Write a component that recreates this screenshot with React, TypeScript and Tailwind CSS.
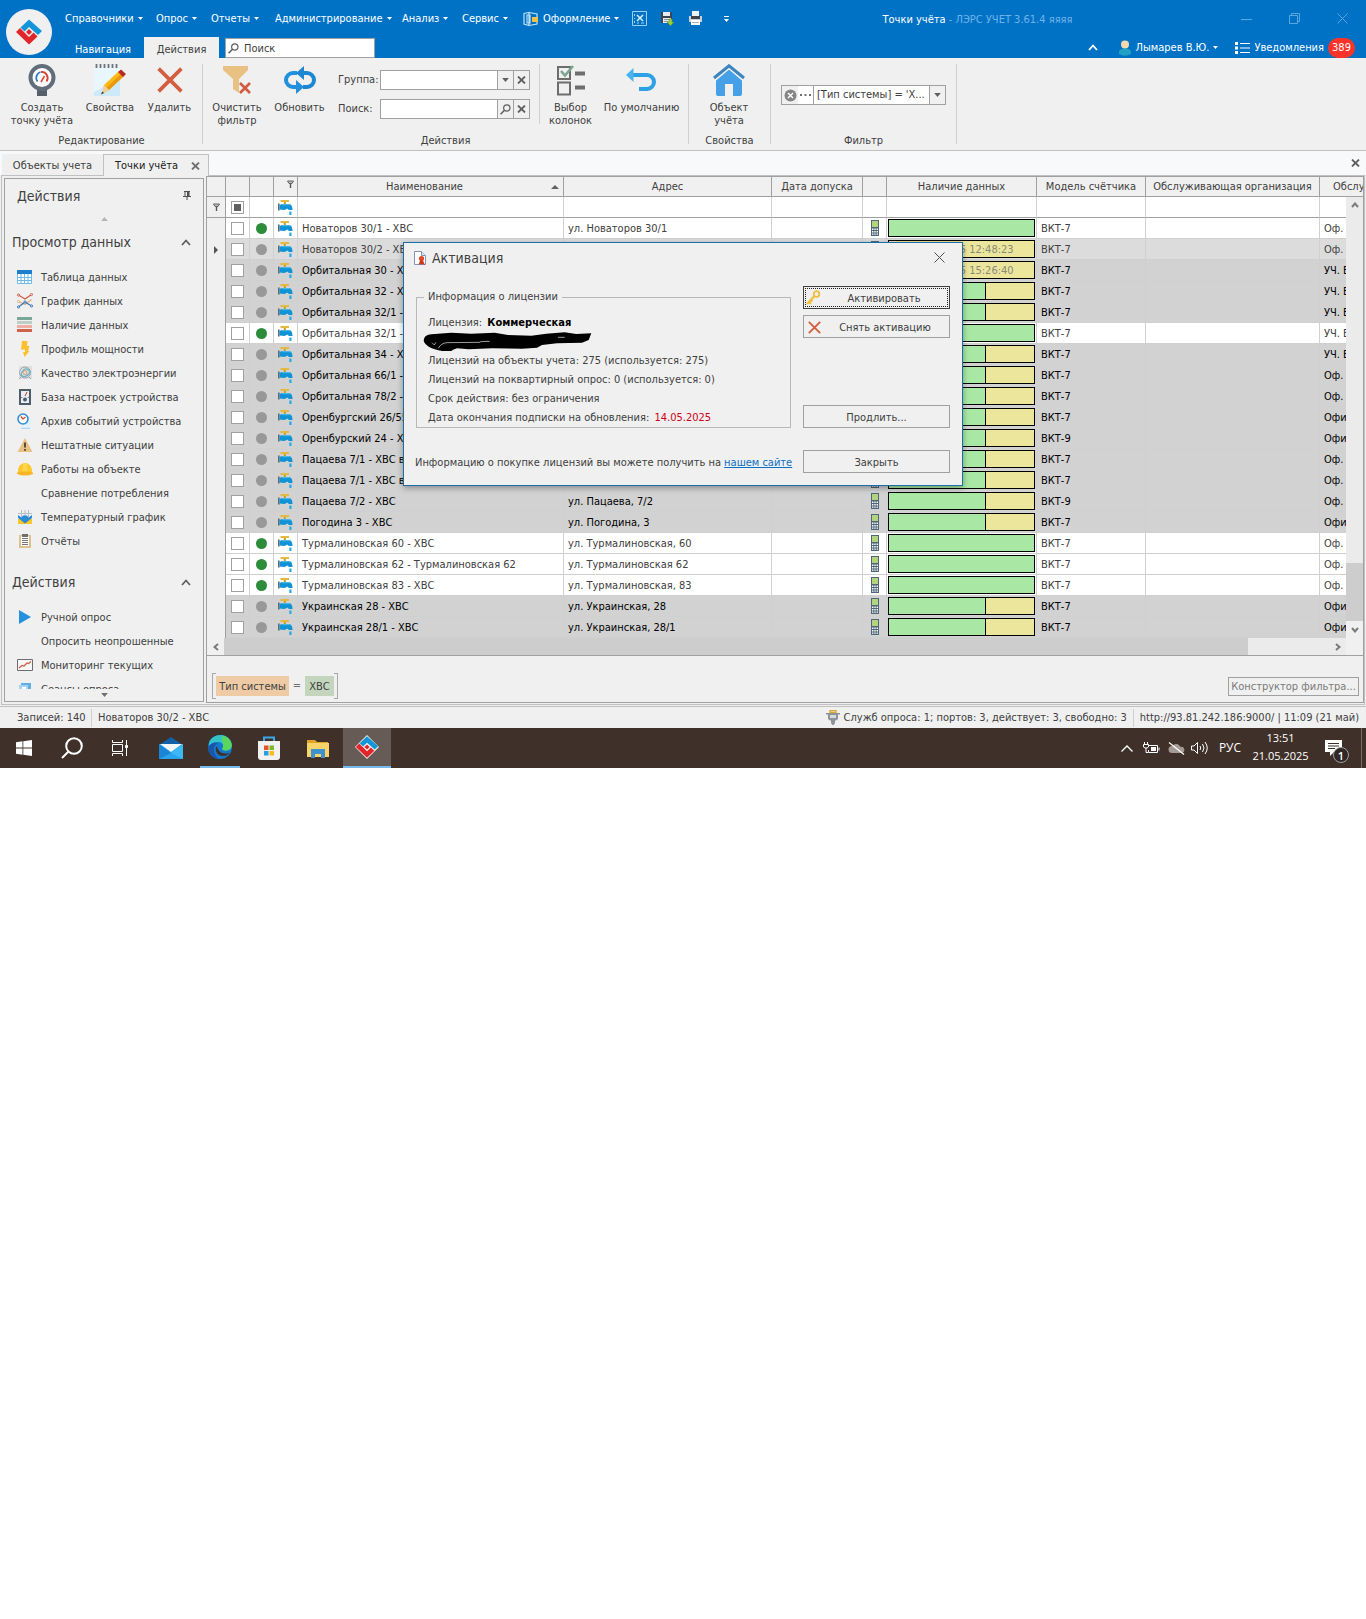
import React from 'react'
import clsx from 'clsx'

type IconProps = { className?: string }

type PointRow = {
  name: string
  address: string
  model: string
  service: string
  state: 'ok' | 'off' | 'current'
  data: 'full' | 'part' | string
}

const MENU = [
  { title: 'Справочники', width: 'w-[91px]' },
  { title: 'Опрос', width: 'w-[55px]' },
  { title: 'Отчеты', width: 'w-[64px]' },
  { title: 'Администрирование', width: 'w-[127px]' },
  { title: 'Анализ', width: 'w-[60px]' },
  { title: 'Сервис', width: 'w-[61px]' },
]

const ROWS: PointRow[] = [
  { name: 'Новаторов 30/1 - ХВС', address: 'ул. Новаторов 30/1', model: 'ВКТ-7', service: 'Оф.', state: 'ok', data: 'full' },
  { name: 'Новаторов 30/2 - ХВС', address: 'ул. Новаторов 30/2', model: 'ВКТ-7', service: 'Оф.', state: 'current', data: '14.05.2025 12:48:23' },
  { name: 'Орбитальная 30 - ХВС', address: 'ул. Орбитальная, 30', model: 'ВКТ-7', service: 'УЧ. Е', state: 'off', data: '14.05.2025 15:26:40' },
  { name: 'Орбитальная 32 - ХВС', address: 'ул. Орбитальная, 32', model: 'ВКТ-7', service: 'УЧ. Е', state: 'off', data: 'part' },
  { name: 'Орбитальная 32/1 - ХВС', address: 'ул. Орбитальная, 32/1', model: 'ВКТ-7', service: 'УЧ. Е', state: 'off', data: 'part' },
  { name: 'Орбитальная 32/1 - ХВС', address: 'ул. Орбитальная, 32/1', model: 'ВКТ-7', service: 'УЧ. Е', state: 'ok', data: 'full' },
  { name: 'Орбитальная 34 - ХВС', address: 'ул. Орбитальная, 34', model: 'ВКТ-7', service: 'УЧ. Е', state: 'off', data: 'part' },
  { name: 'Орбитальная 66/1 - ХВС', address: 'ул. Орбитальная, 66/1', model: 'ВКТ-7', service: 'Оф.', state: 'off', data: 'part' },
  { name: 'Орбитальная 78/2 - ХВС', address: 'ул. Орбитальная, 78/2', model: 'ВКТ-7', service: 'Оф.', state: 'off', data: 'part' },
  { name: 'Оренбургский 26/55 - ХВС', address: 'пр. Оренбургский, 26/55', model: 'ВКТ-7', service: 'Офис', state: 'off', data: 'part' },
  { name: 'Оренбурский 24 - ХВС', address: 'пр. Оренбургский, 24', model: 'ВКТ-9', service: 'Офис', state: 'off', data: 'part' },
  { name: 'Пацаева 7/1 - ХВС ввод 1', address: 'ул. Пацаева, 7/1', model: 'ВКТ-7', service: 'Оф.', state: 'off', data: 'part' },
  { name: 'Пацаева 7/1 - ХВС ввод 2', address: 'ул. Пацаева, 7/1', model: 'ВКТ-7', service: 'Оф.', state: 'off', data: 'part' },
  { name: 'Пацаева 7/2 - ХВС', address: 'ул. Пацаева, 7/2', model: 'ВКТ-9', service: 'Оф.', state: 'off', data: 'part' },
  { name: 'Погодина 3 - ХВС', address: 'ул. Погодина, 3', model: 'ВКТ-7', service: 'Офис', state: 'off', data: 'part' },
  { name: 'Турмалиновская 60 - ХВС', address: 'ул. Турмалиновская, 60', model: 'ВКТ-7', service: 'Оф.', state: 'ok', data: 'full' },
  { name: 'Турмалиновская 62 - Турмалиновская 62', address: 'ул. Турмалиновская 62', model: 'ВКТ-7', service: 'Оф.', state: 'ok', data: 'full' },
  { name: 'Турмалиновская 83 - ХВС', address: 'ул. Турмалиновская, 83', model: 'ВКТ-7', service: 'Оф.', state: 'ok', data: 'full' },
  { name: 'Украинская 28 - ХВС', address: 'ул. Украинская, 28', model: 'ВКТ-7', service: 'Офис', state: 'off', data: 'part' },
  { name: 'Украинская 28/1 - ХВС', address: 'ул. Украинская, 28/1', model: 'ВКТ-7', service: 'Офис', state: 'off', data: 'part' },
]

const ROW_STYLE = {
  ok: 'bg-white text-[#404040]',
  off: 'bg-[#d2d2d2] text-black',
  current: 'bg-[#dcdcdc] text-[#404040]',
} as const

const CELL = 'h-[21px] border-r border-b border-[#d0d0d0] px-1 pt-px whitespace-nowrap overflow-hidden'
const ICON_CELL = 'h-[21px] border-r border-b border-[#d0d0d0]'
const FILTER_CELL = 'h-[21px] border-r border-b border-[#d0d0d0] border-b-[#a0a0a0]'
const HEAD = 'h-5 border-r border-b border-[#a0a0a0] bg-[#f0f0f0] font-normal whitespace-nowrap overflow-hidden'
const EDIT_BUTTON = 'flex w-4 shrink-0 items-center justify-center border-l border-[#a0a0a0] bg-[#f0f0f0] text-[#606060]'

/* ---------- icons ---------- */

const CaretDown: React.FC<IconProps> = ({ className }) => (
  <svg width="5" height="3" viewBox="0 0 5 3" className={clsx('shrink-0', className)}>
    <path d="M0 0h5L2.500 3z" fill="currentColor" />
  </svg>
)

const Chevron: React.FC<IconProps> = ({ className }) => (
  <svg width="10" height="7" viewBox="0 0 10 7" className={clsx('shrink-0', className)}>
    <path d="M1 6l4-4.500L9 6" fill="none" stroke="currentColor" strokeWidth="1.800" />
  </svg>
)

const ScrollArrow: React.FC<IconProps> = ({ className }) => (
  <svg width="8" height="6" viewBox="0 0 8 6" className={clsx('shrink-0', className)}>
    <path d="M1 5l3-3.500L7 5" fill="none" stroke="#7a7a7a" strokeWidth="2" />
  </svg>
)

const Cross: React.FC<IconProps> = ({ className }) => (
  <svg width="9" height="8" viewBox="0 0 9 8" className={clsx('shrink-0', className)}>
    <path d="M1 .5l7 7M8 .5l-7 7" stroke="currentColor" strokeWidth="1.800" />
  </svg>
)

const RedCross: React.FC<{ size: number }> = ({ size }) => (
  <svg width={size} height={size} viewBox="0 0 24 24" className="shrink-0">
    <path d="M1.500 1.500L22.500 22.500M22.500 1.500L1.500 22.500" stroke="#d45d3f" strokeWidth="3.400" />
  </svg>
)

const Magnifier: React.FC<IconProps> = ({ className }) => (
  <svg width="11" height="11" viewBox="0 0 11 11" className={clsx('shrink-0', className)}>
    <circle cx="6.800" cy="4" r="3.200" fill="none" stroke="#606060" strokeWidth="1.200" />
    <path d="M4.500 6.300L.6 10.200" stroke="#606060" strokeWidth="1.600" />
  </svg>
)

const LersMark: React.FC<{ size: number; framed?: boolean }> = ({ size, framed }) => (
  <svg width={size} height={size} viewBox="0 0 28 28">
    {framed && <path d="M14 0l14 14-14 14L0 14z" fill="#f2f2f2" />}
    <path d="M14 1.500L27 13l-4 4-9-8-4.500 4.500L5.500 9.500z" fill="#1296d8" />
    <path d="M1 14l4-4 4.500 4.500L14 19l4.500-4.500 4 4L14 26.500z" fill="#e2252b" />
    <path d="M14 11l3 3-3 3-3-3z" fill="#e2252b" />
  </svg>
)

const MeterIcon = () => (
  <svg width="28" height="32" viewBox="0 0 28 32">
    <path d="M9 24h10v8H9z" fill="#56606b" />
    <circle cx="14" cy="13.500" r="11.500" fill="#fff" stroke="#616d79" strokeWidth="4" />
    <path d="M9.500 17.500a6 6 0 0 1 3-9.500" fill="none" stroke="#2878c8" strokeWidth="1.800" />
    <path d="M13 8a6 6 0 0 1 5.500 9.500" fill="none" stroke="#d9432f" strokeWidth="1.800" />
    <path d="M13 18l3.500-6" stroke="#d9432f" strokeWidth="1.500" />
  </svg>
)

const NotepadIcon = () => (
  <svg width="32" height="32" viewBox="0 0 32 32">
    <path d="M0 4h26v28H0z" fill="#cdeafb" />
    <path d="M0 4h26v10L0 28z" fill="#e8f6fe" />
    <path d="M2.500 0v4M6.500 0v4M10.500 0v4M14.500 0v4M18.500 0v4M22.500 0v4" stroke="#6b7480" strokeWidth="1.800" />
    <path d="M10 21L25 7l5 5-15 14-7 4z" fill="#fdb913" />
    <path d="M12.500 23.500L27.500 9.500l2.500 2.500-15 14z" fill="#e89a0c" />
    <path d="M24 8l3-2.500 5 4.500-3 3z" fill="#b62a25" />
    <path d="M10 21l5 5-7.500 4z" fill="#f0cda0" />
    <path d="M8.300 27.500L10 29l-3 1.500z" fill="#333" />
  </svg>
)

const FunnelIcon = () => (
  <svg width="30" height="30" viewBox="0 0 30 30">
    <path d="M1 1h25v4l-9 9v14l-6-4V14L1 5z" fill="#e8c183" />
    <path d="M18 18l10 10M28 18L18 28" stroke="#d15b40" strokeWidth="2.600" />
  </svg>
)

const RefreshIcon = () => (
  <svg width="32" height="28" viewBox="0 0 32 28">
    <path d="M13 21H9A6.500 6.500 0 0 1 9 7h4" fill="none" stroke="#2390dc" strokeWidth="4" />
    <path d="M19 7h4a6.500 6.500 0 0 1 0 14h-4" fill="none" stroke="#1f86d2" strokeWidth="4" />
    <path d="M20 0v14l-8-7z" fill="#1f86d2" />
    <path d="M12 14v14l8-7z" fill="#2390dc" />
  </svg>
)

const ColumnsIcon = () => (
  <svg width="28" height="32" viewBox="0 0 28 32">
    <path d="M1 3h12v12H1zM1 18.500h12v12H1z" fill="none" stroke="#6d6d6d" strokeWidth="2" />
    <path d="M18 9.500h10M18 23.500h10" stroke="#6d6d6d" strokeWidth="4" />
    <path d="M4 7l4 4.500L16 2" fill="none" stroke="#7aa694" strokeWidth="2.600" />
  </svg>
)

const UndoIcon = () => (
  <svg width="32" height="24" viewBox="0 0 32 24">
    <path d="M6 7h15a6.500 6.500 0 0 1 0 14h-8" fill="none" stroke="#2ea1e6" strokeWidth="4" />
    <path d="M7.500 0v14L0 7z" fill="#48b3ee" />
  </svg>
)

const HouseIcon = () => (
  <svg width="32" height="32" viewBox="0 0 32 32">
    <path d="M3 16L16 4l13 12v14a2 2 0 0 1-2 2h-7V20h-8v12H5a2 2 0 0 1-2-2z" fill="#45a0e8" />
    <path d="M0 16.500L16 3l16 13.500" fill="none" stroke="#f0f0f0" strokeWidth="4" />
    <path d="M1 14L16 1.800 31 14" fill="none" stroke="#3d83bd" strokeWidth="3" />
  </svg>
)

const TapIcon = () => (
  <svg width="15" height="15" viewBox="0 0 15 15" className="mx-auto block">
    <path d="M2.500 0h8.500v2H2.500z" fill="#e3b93e" />
    <path d="M5.800 2h2v2.500h-2z" fill="#c79a22" />
    <path d="M0 3.500h1.600v7H0z" fill="#5c6b78" />
    <path d="M1.600 5L4 4h6c3.200 0 4.500 2 4.500 6h-4c0-1-.5-1.500-1.500-1.300L6.500 10 1.600 9.500z" fill="#0d93d6" />
    <path d="M4 4h6c1.400 0 2.400.4 3.200 1.300H4z" fill="#45b6ea" />
    <path d="M11.300 11.500h2.200V15h-2.200z" fill="#27a9e6" />
  </svg>
)

const DeviceIcon = () => (
  <svg width="8" height="16" viewBox="0 0 8 16" className="mx-auto block">
    <path d="M0 0h8v16H0z" fill="#50677a" />
    <path d="M1 1h6v6H1z" fill="#b3d37c" />
    <path d="M1 8.500h1.400v1.400H1zM3.300 8.500h1.400v1.400H3.300zM5.600 8.500H7v1.400H5.600zM1 11h1.400v1.400H1zM3.300 11h1.400v1.400H3.300zM5.600 11H7v1.400H5.600zM1 13.400h1.400v1.400H1zM3.300 13.400h1.400v1.400H3.300zM5.600 13.400H7v1.400H5.600z" fill="#fff" />
  </svg>
)

const FilterPin: React.FC<IconProps> = ({ className }) => (
  <svg width="7" height="8" viewBox="0 0 7 8" className={className}>
    <path d="M.5 1h6L5 3.500H2z" fill="#bbb" stroke="#666" />
    <path d="M3.500 3.500V8" stroke="#555" strokeWidth="1.400" />
  </svg>
)

const SideTable = () => (
  <svg width="16" height="14" viewBox="0 0 16 14">
    <path d="M.5.500h14v13H.5z" fill="#fff" stroke="#6fb9ea" />
    <path d="M0 0h15v4H0z" fill="#1b7fd0" />
    <path d="M0 7.500h15M0 10.500h15M4 4v10M7.500 4v10M11 4v10" stroke="#6fb9ea" />
  </svg>
)

const SideChart = () => (
  <svg width="16" height="16" viewBox="0 0 16 16" fill="none">
    <path d="M1.500 2L8 6l6.500-4.500" stroke="#d35d45" strokeWidth="1.300" />
    <path d="M1.500 8.500L8 11.500l6.500-5" stroke="#dfb27a" strokeWidth="1.300" />
    <path d="M1.500 14L8 9l6.500 4" stroke="#3c78b4" strokeWidth="1.300" />
    <g fill="#f0f0f0">
      <circle cx="1.500" cy="2" r="1.100" stroke="#d35d45" />
      <circle cx="14.500" cy="1.500" r="1.100" stroke="#d35d45" />
      <circle cx="1.500" cy="8.500" r="1.100" stroke="#dfb27a" />
      <circle cx="1.500" cy="14" r="1.100" stroke="#3c78b4" />
      <circle cx="8" cy="9" r="1.100" stroke="#3c78b4" />
      <circle cx="14.500" cy="13" r="1.100" stroke="#3c78b4" />
    </g>
  </svg>
)

const SideBars = () => (
  <svg width="16" height="16" viewBox="0 0 16 16">
    <path d="M0 0h15v3H0z" fill="#79a898" />
    <path d="M0 4h15v3H0z" fill="#bccfc6" />
    <path d="M0 8h15v3H0z" fill="#eeaea5" />
    <path d="M0 12h15v3H0z" fill="#cf6248" />
  </svg>
)

const SideBolt = () => (
  <svg width="16" height="16" viewBox="0 0 16 16">
    <path d="M5 0h5.500L10 5h2.500L11 10h1.500L7.500 16 6 11h2V8.500H4z" fill="#fcc02e" />
  </svg>
)

const SideQuality = () => (
  <svg width="16" height="16" viewBox="0 0 16 16" fill="none">
    <path d="M2 1h13v13H2z" fill="#dfdfdd" />
    <circle cx="8" cy="7.500" r="5.500" stroke="#9aa6ad" />
    <path d="M4 9c3-7 7-6 9-2-2 5-8 6-9 2z" stroke="#6bb3c8" strokeWidth="1.200" />
    <circle cx="8" cy="7.500" r="2" stroke="#caa27c" />
    <path d="M4 12l-2 2M12 12l2 2" stroke="#9aa6ad" />
  </svg>
)

const SideDevice = () => (
  <svg width="16" height="16" viewBox="0 0 16 16">
    <path d="M2 0h12v16H2z" fill="#4e5d6c" />
    <path d="M4 2h8v6l-2 1h2v5H4V9h2L4 8z" fill="#e9eef2" />
    <path d="M8 7l2-4" stroke="#c0392b" />
    <circle cx="8" cy="10.500" r="2" fill="#4e5d6c" />
  </svg>
)

const SideArchive = () => (
  <svg width="16" height="16" viewBox="0 0 16 16" fill="none">
    <path d="M9 4h5v12H5z" fill="#e2f1fb" />
    <circle cx="6" cy="6" r="5" fill="#fff" stroke="#2f8fd6" strokeWidth="1.600" />
    <path d="M3.800 3.500L6 6l2.500-2" stroke="#d9432f" strokeWidth="1.200" />
    <path d="M4 15.300h9" stroke="#9fd2f4" />
  </svg>
)

const SideWarning = () => (
  <svg width="16" height="14" viewBox="0 0 16 14">
    <path d="M8 0l7.500 14H.5z" fill="#e8c285" />
    <path d="M8 4.500v5M8 11v1.700" stroke="#4d4032" strokeWidth="1.800" />
  </svg>
)

const SideHelmet = () => (
  <svg width="16" height="14" viewBox="0 0 16 14">
    <path d="M1 11V9a7 8 0 0 1 14 0v2z" fill="#fdc62d" />
    <path d="M6 1.500h4l.5 8h-5z" fill="#fdd74a" />
    <path d="M0 10.500q8-2 16 0V12q-8 3-16 0z" fill="#f7b424" />
  </svg>
)

const SideTemp = () => (
  <svg width="16" height="16" viewBox="0 0 16 16">
    <path d="M1 2h14v6H1z" fill="#eef1f3" />
    <path d="M4.500 1v7M8 1v7M11.500 1v7M1 4.500h14" stroke="#b7bec4" />
    <path d="M1 10h14v5H1z" fill="#fdc62d" />
    <path d="M1 6l3.500 2.500L6 6.500h4l1.500 2L15 6v3l-7 5.500L1 9z" fill="#2b8bd4" />
  </svg>
)

const SideReport = () => (
  <svg width="16" height="16" viewBox="0 0 16 16">
    <path d="M2 2h12v13H2z" fill="#dfc08f" />
    <path d="M4 3h8v10H4z" fill="#fafafa" />
    <path d="M5 5.500h6M5 7.500h6M5 9.500h6M5 11.500h6" stroke="#777" />
    <path d="M5 1h6v3H5z" fill="#6f6f6f" />
  </svg>
)

const SidePlay = () => (
  <svg width="16" height="14" viewBox="0 0 16 14">
    <path d="M2 0l12 7-12 7z" fill="#2490de" />
  </svg>
)

const SideMonitor = () => (
  <svg width="16" height="12" viewBox="0 0 16 12" fill="none">
    <path d="M.5.500h15v11H.5z" fill="#f7f7f7" stroke="#6d6d6d" />
    <path d="M2 9l3-2.500 2 .5 3-3 1.500.5L14 2.500" stroke="#d5593f" strokeWidth="1.200" />
  </svg>
)

const SideSession = () => (
  <svg width="16" height="16" viewBox="0 0 16 16">
    <path d="M4 2h10v10H4z" fill="#64aede" />
    <path d="M2 4h9v9H2z" fill="#a8d3ee" />
    <path d="M5 6h4v2H5z" fill="#fff" />
  </svg>
)

/* ---------- title bar and ribbon ---------- */

const TitleBar = () => (
  <header className="flex h-[58px] bg-[#0072c6] pl-[6px] text-white">
    <button type="button" aria-label="ЛЭРС УЧЕТ" className="mt-[9px] flex size-[46px] shrink-0 items-center justify-center rounded-full bg-[#f0f0f0]">
      <LersMark size={28} />
    </button>
    <div className="flex min-w-0 flex-1 flex-col">
      <div className="flex h-[37px] items-center">
        <nav className="ml-[13px] flex shrink-0">
          {MENU.map((item) => (
            <button key={item.title} type="button" className={clsx('flex items-center gap-1 whitespace-nowrap', item.width)}>
              {item.title}
              <CaretDown />
            </button>
          ))}
          <button type="button" className="flex w-[109px] items-center gap-1">
            <svg width="16" height="16" viewBox="0 0 16 16" fill="none" className="shrink-0">
              <path d="M1 2.500l5-1v13l-5-1.500zM6 1.500L14 3v10l-8 1.500M4 4h3v8H4z" stroke="#bfe0f7" strokeWidth="1.200" />
              <path d="M9 6h6v5H9z" fill="#f2c14b" />
            </svg>
            Оформление
            <CaretDown />
          </button>
          <div className="flex items-center gap-[13px]">
            <button type="button" aria-label="Настройка">
              <svg width="15" height="15" viewBox="0 0 15 15" fill="none">
                <path d="M.5.500h14v14H.5z" stroke="#9fd0f2" />
                <path d="M5 4l6 6M11 4l-6 6" stroke="#d8edfb" strokeWidth="1.600" />
                <path d="M2.500 3v2M2.500 7v1M2.500 10v2M5 12h2M9 12h3" stroke="#9fd0f2" />
              </svg>
            </button>
            <button type="button" aria-label="Сохранить">
              <svg width="15" height="15" viewBox="0 0 15 15">
                <path d="M1 1h10l1 1v10H1z" fill="#3d4450" />
                <path d="M3 1h7v4H3zM3 7h8v5H3z" fill="#e8ecf0" />
                <path d="M4 8.500h5M4 10.500h4" stroke="#8c949c" />
                <path d="M9 8h3v3h2l-3.500 4L7 11h2z" fill="#9bd13c" stroke="#4d8420" strokeWidth=".5" />
              </svg>
            </button>
            <button type="button" aria-label="Печать">
              <svg width="15" height="15" viewBox="0 0 15 15">
                <path d="M4 0h7v6H4z" fill="#eef2f6" />
                <path d="M1 5h13v6H1z" fill="#c9d0d8" />
                <path d="M3 5h9v3H3z" fill="#3b434e" />
                <path d="M3 9h9v5H3z" fill="#fff" />
                <path d="M4 11.500h7" stroke="#aab2ba" />
              </svg>
            </button>
            <button type="button" aria-label="Ещё" className="ml-2">
              <svg width="5" height="6" viewBox="0 0 5 6" fill="currentColor">
                <path d="M0 0h5v1H0zM0 3h5L2.500 6z" />
              </svg>
            </button>
          </div>
        </nav>
        <p className="min-w-0 flex-1 truncate pt-[2px] pl-1 text-center">
          Точки учёта <span className="text-[#6fb4e8]">- ЛЭРС УЧЕТ 3.61.4 яяяя</span>
        </p>
        <div className="flex shrink-0 text-[#5aa6e0]">
          <button type="button" aria-label="Свернуть" className="flex h-8 w-12 items-center justify-center">
            <svg width="11" height="11" viewBox="0 0 11 11"><path d="M0 6.500h11" stroke="currentColor" /></svg>
          </button>
          <button type="button" aria-label="Развернуть" className="flex h-8 w-12 items-center justify-center">
            <svg width="11" height="11" viewBox="0 0 11 11" fill="none" stroke="currentColor">
              <path d="M.5 2.500h8v8h-8zM2.500 2.500v-2h8v8h-2" />
            </svg>
          </button>
          <button type="button" aria-label="Закрыть окно" className="flex h-8 w-12 items-center justify-center">
            <svg width="11" height="11" viewBox="0 0 11 11" stroke="currentColor"><path d="M.5.500l10 10M10.500.500l-10 10" /></svg>
          </button>
        </div>
      </div>
      <div className="flex h-[21px] items-center">
        <button type="button" className="ml-[11px] h-full w-20 pt-1 text-center">Навигация</button>
        <button type="button" className="ml-px h-full w-[75px] bg-[#f0f0f0] pt-1 text-center text-[#404040]">Действия</button>
        <label className="mt-px ml-[6px] flex h-5 w-[150px] items-center gap-[5px] border border-[#a0a0a0] bg-white px-[2px] text-[#404040]">
          <Magnifier />
          <input type="text" placeholder="Поиск" aria-label="Поиск команд" className="min-w-0 flex-1 bg-transparent pt-px outline-none placeholder:text-[#404040]" />
        </label>
        <div className="ml-auto flex items-center pr-[11px]">
          <button type="button" aria-label="Свернуть ленту" className="mr-5">
            <Chevron />
          </button>
          <button type="button" className="mr-[17px] flex items-center gap-1">
            <svg width="14" height="16" viewBox="0 0 14 16">
              <path d="M1 12q0-3.500 6-3.500T13 12v2q-6 3.500-12 0z" fill="#1fa0c4" />
              <circle cx="7" cy="4.500" r="4" fill="#f6d9ae" />
            </svg>
            Лымарев В.Ю.
            <CaretDown />
          </button>
          <button type="button" className="flex items-center gap-1">
            <svg width="15" height="12" viewBox="0 0 15 12" fill="#fff">
              <path d="M0 0h3v3H0zM0 4.500h3v3H0zM0 9h3v3H0zM5 1h10v1H5zM5 5.500h10v1H5zM5 10h10v1H5z" />
            </svg>
            Уведомления
            <span className="flex h-5 w-[27px] items-center justify-center rounded-[10px] bg-[#fb3328]">389</span>
          </button>
        </div>
      </div>
    </div>
  </header>
)

type RibbonButtonProps = { icon: React.ReactNode; width: string; children: React.ReactNode }

const RibbonButton: React.FC<RibbonButtonProps> = ({ icon, width, children }) => (
  <button type="button" className={clsx('flex shrink-0 flex-col items-center', width)}>
    <span className="flex h-8 items-center">{icon}</span>
    <span className="mt-[5px] leading-[13px]">{children}</span>
  </button>
)

type RibbonGroupProps = { title: string; className?: string; children: React.ReactNode }

const RibbonGroup: React.FC<RibbonGroupProps> = ({ title, className, children }) => (
  <section className={clsx('flex h-20 shrink-0 flex-col border-r border-[#cfcfcf]', className)}>
    <div className="flex h-[70px] shrink-0">{children}</div>
    <h2 className="shrink-0 text-center leading-[14px]">{title}</h2>
  </section>
)

const Ribbon = () => (
  <div className="flex h-[93px] overflow-hidden border-b border-[#c0c0c0] pt-[6px]">
    <RibbonGroup title="Редактирование" className="w-[203px] pr-1 pl-[5px]">
      <RibbonButton icon={<MeterIcon />} width="w-[74px]">Создать<br />точку учёта</RibbonButton>
      <RibbonButton icon={<NotepadIcon />} width="w-[62px]">Свойства</RibbonButton>
      <RibbonButton icon={<RedCross size={26} />} width="w-[57px]">Удалить</RibbonButton>
    </RibbonGroup>
    <RibbonGroup title="Действия" className="w-[486px]">
      <div className="flex pl-1">
        <RibbonButton icon={<FunnelIcon />} width="w-[60px]">Очистить<br />фильтр</RibbonButton>
        <RibbonButton icon={<RefreshIcon />} width="w-[65px]">Обновить</RibbonButton>
        <div className="ml-[6px] flex w-[192px] flex-col gap-[9px] pt-[6px]">
          <div className="flex h-5 items-center">
            <label htmlFor="group" className="w-[42px] shrink-0">Группа:</label>
            <div className="flex h-full min-w-0 flex-1 border border-[#a0a0a0] bg-white">
              <select id="group" className="min-w-0 flex-1 appearance-none outline-none" />
              <span className={EDIT_BUTTON}>
                <CaretDown className="h-1 w-[7px]" />
              </span>
              <button type="button" aria-label="Очистить группу" className={EDIT_BUTTON}>
                <Cross />
              </button>
            </div>
          </div>
          <div className="flex h-5 items-center">
            <label htmlFor="search" className="w-[42px] shrink-0">Поиск:</label>
            <div className="flex h-full min-w-0 flex-1 border border-[#a0a0a0] bg-white">
              <input id="search" type="text" className="min-w-0 flex-1 outline-none" />
              <button type="button" aria-label="Найти" className={EDIT_BUTTON}>
                <Magnifier />
              </button>
              <button type="button" aria-label="Очистить поиск" className={EDIT_BUTTON}>
                <Cross />
              </button>
            </div>
          </div>
        </div>
        <div className="ml-[9px] h-[60px] w-px bg-[#cfcfcf]" />
        <RibbonButton icon={<ColumnsIcon />} width="w-[61px]">Выбор<br />колонок</RibbonButton>
        <RibbonButton icon={<UndoIcon />} width="w-[81px]">По умолчанию</RibbonButton>
      </div>
    </RibbonGroup>
    <RibbonGroup title="Свойства" className="w-[82px]">
      <RibbonButton icon={<HouseIcon />} width="w-20">Объект<br />учёта</RibbonButton>
    </RibbonGroup>
    <RibbonGroup title="Фильтр" className="w-[186px] px-[10px]">
      <div className="mt-[21px] flex h-5 w-[165px] border border-[#a0a0a0] bg-white">
        <button type="button" aria-label="Сбросить фильтр" className="flex w-4 items-center justify-center bg-[#f0f0f0]">
          <svg width="13" height="13" viewBox="0 0 13 13">
            <circle cx="6.500" cy="6.500" r="6" fill="#858585" />
            <path d="M4 4l5 5M9 4L4 9" stroke="#fff" strokeWidth="1.400" />
          </svg>
        </button>
        <button type="button" aria-label="Изменить фильтр" className="flex w-4 items-center justify-center border-r border-[#a0a0a0]">
          <svg width="11" height="2" viewBox="0 0 11 2" fill="#707070"><path d="M0 0h2v2H0zM4.500 0h2v2h-2zM9 0h2v2H9z" /></svg>
        </button>
        <select aria-label="Фильтр" className="min-w-0 flex-1 appearance-none bg-transparent px-[3px] outline-none">
          <option>[Тип системы] = 'Х...</option>
        </select>
        <span className={EDIT_BUTTON}>
          <CaretDown className="h-1 w-[7px]" />
        </span>
      </div>
    </RibbonGroup>
  </div>
)

const DocumentTabs = () => (
  <div className="flex h-6 items-end bg-[#f8f9fb] pl-[2px]">
    <button type="button" className="h-[21px] w-[101px] bg-[#efefef] pt-[2px] text-center">Объекты учета</button>
    <div className="relative z-10 -mb-px flex h-[22px] w-[106px] items-center border border-b-0 border-[#c0c0c0] bg-[#f0f0f0] pr-2 pl-[11px] text-[#202020]">
      <button type="button">Точки учёта</button>
      <button type="button" aria-label="Закрыть вкладку" className="ml-auto text-[#707070]">
        <Cross />
      </button>
    </div>
    <button type="button" aria-label="Закрыть все вкладки" className="mr-[6px] mb-2 ml-auto text-[#606060]">
      <Cross />
    </button>
  </div>
)

/* ---------- side panel ---------- */

const VIEW_ITEMS = [
  { title: 'Таблица данных', icon: <SideTable /> },
  { title: 'График данных', icon: <SideChart /> },
  { title: 'Наличие данных', icon: <SideBars /> },
  { title: 'Профиль мощности', icon: <SideBolt /> },
  { title: 'Качество электроэнергии', icon: <SideQuality /> },
  { title: 'База настроек устройства', icon: <SideDevice /> },
  { title: 'Архив событий устройства', icon: <SideArchive /> },
  { title: 'Нештатные ситуации', icon: <SideWarning /> },
  { title: 'Работы на объекте', icon: <SideHelmet /> },
  { title: 'Сравнение потребления', icon: null },
  { title: 'Температурный график', icon: <SideTemp /> },
  { title: 'Отчёты', icon: <SideReport /> },
]

const ACTION_ITEMS = [
  { title: 'Ручной опрос', icon: <SidePlay /> },
  { title: 'Опросить неопрошенные', icon: null },
  { title: 'Мониторинг текущих', icon: <SideMonitor /> },
  { title: 'Сеансы опроса', icon: <SideSession /> },
]

type SideSectionProps = { title: string; items: { title: string; icon: React.ReactNode }[] }

const SideSection: React.FC<SideSectionProps> = ({ title, items }) => (
  <section className="mb-[11px]">
    <button type="button" className="mb-[5px] flex h-9 w-full items-center justify-between pr-3 pl-[7px] text-sm">
      {title}
      <Chevron className="text-[#606060]" />
    </button>
    <ul>
      {items.map((item) => (
        <li key={item.title}>
          <button type="button" className="flex h-6 w-full items-center gap-2 pl-3 whitespace-nowrap">
            <span className="flex w-4 justify-center">{item.icon}</span>
            <span className="pt-[2px]">{item.title}</span>
          </button>
        </li>
      ))}
    </ul>
  </section>
)

const SidePanel = () => (
  <aside className="mt-[2px] mb-[2px] w-[200px] shrink-0 border border-[#a0a0a0]">
    <div className="flex h-[35px] items-center justify-between px-3 pb-[2px]">
      <h2 className="text-sm">Действия</h2>
      <button type="button" aria-label="Закрепить">
        <svg width="8" height="9" viewBox="0 0 8 9" fill="#505050">
          <path d="M1 0h6v1H6.500v4H8v1H4.500v3h-1V6H0V5h1.500V1H1zM2.500 1v4h1.500V1z" fillRule="evenodd" />
        </svg>
      </button>
    </div>
    <div className="flex h-[10px] items-center justify-center text-[#b4b4b4]">
      <CaretDown className="h-1 w-[7px] rotate-180" />
    </div>
    <div className="h-[465px] overflow-hidden">
      <SideSection title="Просмотр данных" items={VIEW_ITEMS} />
      <SideSection title="Действия" items={ACTION_ITEMS} />
    </div>
    <div className="flex h-[11px] items-center justify-center text-[#707070]">
      <CaretDown className="h-1 w-[7px]" />
    </div>
  </aside>
)

/* ---------- points grid ---------- */

const DataBar: React.FC<{ data: string }> = ({ data }) => {
  if (data === 'full') return <div className="h-[18px] border border-black bg-[#a8e8a4]" />
  if (data === 'part') {
    return (
      <div className="flex h-[18px] border border-black bg-[#ece69c]">
        <div className="w-2/3 border-r border-black bg-[#a8e8a4]" />
      </div>
    )
  }
  return (
    <div className="flex h-[18px] items-center justify-center border border-black bg-[#ece69c] pt-px text-[#8a8a78]">{data}</div>
  )
}

const GridTable = () => (
  <table className="w-full min-w-[1156px] table-fixed border-separate border-spacing-0">
    <colgroup>
      <col className="w-[19px]" />
      <col className="w-6" />
      <col className="w-6" />
      <col className="w-6" />
      <col className="w-[266px]" />
      <col className="w-[208px]" />
      <col className="w-[91px]" />
      <col className="w-6" />
      <col className="w-[150px]" />
      <col className="w-[109px]" />
      <col className="w-[174px]" />
      <col />
    </colgroup>
    <thead>
      <tr>
        <th className={HEAD} />
        <th className={HEAD} />
        <th className={HEAD} />
        <th className={clsx(HEAD, 'align-top')}>
          <FilterPin className="mt-[3px] mr-[3px] ml-auto" />
        </th>
        <th className={HEAD}>
          <div className="flex items-center pr-1">
            <span className="flex-1 text-center">Наименование</span>
            <svg width="8" height="4" viewBox="0 0 8 4"><path d="M0 4h8L4 0z" fill="#606060" /></svg>
          </div>
        </th>
        <th className={HEAD}>Адрес</th>
        <th className={HEAD}>Дата допуска</th>
        <th className={HEAD} />
        <th className={HEAD}>Наличие данных</th>
        <th className={HEAD}>Модель счётчика</th>
        <th className={HEAD}>Обслуживающая организация</th>
        <th className="h-5 overflow-hidden border-b border-[#a0a0a0] bg-[#f0f0f0] pl-[13px] text-left font-normal whitespace-nowrap">Обслуживание</th>
      </tr>
    </thead>
    <tbody>
      <tr className="bg-white">
        <td className="h-[21px] border-r border-b border-[#a0a0a0] bg-[#f0f0f0]">
          <FilterPin className="mx-auto" />
        </td>
        <td className={FILTER_CELL}>
          <label className="mx-auto flex size-[13px] items-center justify-center border border-[#a0a0a0] bg-white">
            <input type="checkbox" aria-label="Выбрать все" className="block size-[7px] appearance-none bg-[#606060]" />
          </label>
        </td>
        <td className={FILTER_CELL} />
        <td className={FILTER_CELL}>
          <TapIcon />
        </td>
        {[0, 1, 2, 3, 4, 5, 6, 7].map((i) => (
          <td key={i} className={FILTER_CELL} />
        ))}
      </tr>
      {ROWS.map((row, i) => (
        <tr key={i} className={ROW_STYLE[row.state]}>
          <td className="h-[21px] border-r border-[#a0a0a0] bg-[#f0f0f0]">
            {row.state === 'current' && (
              <svg width="4" height="8" viewBox="0 0 4 8" className="mx-auto"><path d="M0 0v8l4-4z" fill="#555" /></svg>
            )}
          </td>
          <td className={ICON_CELL}>
            <input type="checkbox" aria-label={row.name} className="mx-auto block size-[13px] appearance-none border border-[#a0a0a0] bg-white" />
          </td>
          <td className={ICON_CELL}>
            <div className={clsx('mx-auto size-[11px] rounded-full', row.state === 'ok' ? 'bg-[#2c8c3a]' : 'bg-[#989898]')} />
          </td>
          <td className={ICON_CELL}>
            <TapIcon />
          </td>
          <td className={CELL}>{row.name}</td>
          <td className={CELL}>{row.address}</td>
          <td className={CELL} />
          <td className={ICON_CELL}>
            <DeviceIcon />
          </td>
          <td className={clsx(ICON_CELL, 'px-px')}>
            <DataBar data={row.data} />
          </td>
          <td className={CELL}>{row.model}</td>
          <td className={CELL} />
          <td className={CELL}>{row.service}</td>
        </tr>
      ))}
    </tbody>
  </table>
)

const PointsGrid = () => (
  <main className="mb-px flex min-w-0 flex-1 flex-col border border-[#a0a0a0]">
    <div className="relative overflow-hidden">
      <GridTable />
      <div className="absolute top-5 right-0 bottom-0 flex w-[17px] flex-col items-center bg-[#ebebeb]">
        <ScrollArrow className="mt-[5px]" />
        <div className="mt-auto h-[58px] w-full bg-[#cdcdcd]" />
        <div className="flex h-[17px] w-full items-center justify-center bg-[#f0f0f0]">
          <ScrollArrow className="rotate-180" />
        </div>
      </div>
    </div>
    <div className="flex h-[18px] items-center border-b border-[#a0a0a0] bg-[#ebebeb]">
      <div className="flex h-full w-[17px] items-center justify-center bg-[#f0f0f0]">
        <ScrollArrow className="-rotate-90" />
      </div>
      <div className="h-full flex-1 bg-[#cdcdcd]" />
      <div className="h-full w-[81px]" />
      <div className="flex h-full w-[17px] items-center justify-center">
        <ScrollArrow className="rotate-90" />
      </div>
      <div className="h-full w-[17px] bg-[#f0f0f0]" />
    </div>
    <div className="flex h-[46px] items-end justify-between pr-1 pb-[3px] pl-[5px]">
      <div className="flex items-center">
        <span className="h-[26px] w-1 border border-r-0 border-[#a8a8a8]" />
        <button type="button" className="h-5 w-[73px] bg-[#eecba5] pt-px">Тип системы</button>
        <span className="w-4 text-center text-[#707070]">=</span>
        <button type="button" className="h-5 w-[29px] bg-[#c3d5bd] pt-px">ХВС</button>
        <span className="h-[26px] w-1 border border-l-0 border-[#a8a8a8]" />
      </div>
      <button type="button" className="mb-[3px] h-[19px] w-[131px] border border-[#a0a0a0] pt-px text-center whitespace-nowrap text-[#7a7a7a]">
        Конструктор фильтра...
      </button>
    </div>
  </main>
)

const StatusBar = () => (
  <footer className="mt-px flex h-[22px] items-center border-t border-[#c0c0c0] pr-[7px] pl-[17px] whitespace-nowrap">
    <span className="w-[74px]">Записей: 140</span>
    <span className="h-[18px] border-l border-[#cfcfcf] pl-[6px] leading-[18px]">Новаторов 30/2 - ХВС</span>
    <svg width="14" height="15" viewBox="0 0 14 15" className="mr-1 ml-auto">
      <path d="M4 .7h6v2H4z" fill="none" stroke="#dba93a" strokeWidth="1.400" />
      <path d="M0 3h14v1.500h-2V9l-2 1.500h-1V13l-1.300 2h-1.400L5 13v-2.500H4L2 9V4.500H0z" fill="#8d9399" />
      <path d="M4 5h6v3H4z" fill="#d5dade" />
    </svg>
    <span className="pr-[6px]">Служб опроса: 1; портов: 3, действует: 3, свободно: 3</span>
    <span className="h-[18px] border-l border-[#cfcfcf] pl-[6px] leading-[18px]">http://93.81.242.186:9000/ | 11:09 (21 май)</span>
  </footer>
)

/* ---------- activation dialog ---------- */

const DIALOG_BUTTON = 'flex h-[23px] w-[147px] items-center border border-[#a0a0a0] pt-[2px]'

const ActivationDialog = () => (
  <div
    role="dialog"
    aria-label="Активация"
    className="absolute top-[242px] left-1/2 z-20 w-[560px] -translate-x-1/2 border border-[#1a6fa8] bg-[#f0f0f0] shadow-[0_2px_6px_rgba(0,0,0,0.35)]"
  >
    <div className="flex h-[31px] items-center pr-[17px] pb-[2px] pl-[10px]">
      <svg width="13" height="14" viewBox="0 0 13 14">
        <path d="M.5.500h7l4 4v9H.5z" fill="#fff" stroke="#8095b8" />
        <path d="M7.500.500v4h4" fill="#dfe7f3" stroke="#8095b8" />
        <circle cx="7.500" cy="7.500" r="2.600" fill="#e04a25" />
        <path d="M6 9.500L4.500 14l2-1 1 1 1-1 2.500 1L9 9.500z" fill="#cc3a1c" />
      </svg>
      <h1 className="ml-[5px] text-sm">Активация</h1>
      <button type="button" aria-label="Закрыть диалог" className="ml-auto">
        <svg width="11" height="11" viewBox="0 0 11 11" stroke="#505050"><path d="M.5.500l10 10M10.500.500l-10 10" /></svg>
      </button>
    </div>
    <div className="p-3">
      <div className="flex justify-between">
        <fieldset className="mt-1 w-[375px] border border-[#b8b8b8] pl-[11px]">
          <legend className="-ml-1 px-1 leading-[14px]">Информация о лицензии</legend>
          <div className="pt-[9px] leading-[19px]">
            <p>
              Лицензия: <b className="ml-[2px] text-black">Коммерческая</b>
            </p>
            <svg width="169" height="19" viewBox="0 0 507 57" className="-ml-[5px] block">
              <path d="M2 26Q3 8 25 7l60-5 60 3 70-3 40 7 70 2 45-6 55-4 35 5 45-2-8 20-20 8-75 2-45 5-15 8-45 3-90-1-70 3-35-3-12 4q-8 8-20 6Q8 50 2 26z" fill="#000" />
              <path d="M46 49q8-16 26-17l100-1M27 32l7 7 5-8M405 16l20 0M172 29l28-1" fill="none" stroke="#e8e8e8" strokeWidth="2" />
            </svg>
            <p>Лицензий на объекты учета: 275 (используется: 275)</p>
            <p>Лицензий на поквартирный опрос: 0 (используется: 0)</p>
            <p>Срок действия: без ограничения</p>
            <p>
              Дата окончания подписки на обновления: <span className="ml-[2px] text-[#d0021b]">14.05.2025</span>
            </p>
          </div>
        </fieldset>
        <div className="flex flex-col gap-[6px]">
          <button type="button" className="flex h-[23px] w-[147px] border border-[#404040] p-px">
            <span className="flex h-full w-full items-center border border-dotted border-[#202020]">
              <svg width="15" height="16" viewBox="0 0 15 16" fill="none">
                <circle cx="10.500" cy="4" r="2.800" stroke="#f0bd3a" strokeWidth="1.800" />
                <path d="M8.500 6L1 14M3 12l2 2M5 10l1.500 1.500" stroke="#f0bd3a" strokeWidth="2" />
              </svg>
              <span className="flex-1 pt-[2px] text-center">Активировать</span>
            </span>
          </button>
          <button type="button" className={clsx(DIALOG_BUTTON, 'pl-1')}>
            <RedCross size={13} />
            <span className="flex-1 text-center">Снять активацию</span>
          </button>
          <button type="button" className={clsx(DIALOG_BUTTON, 'mt-auto justify-center')}>Продлить...</button>
        </div>
      </div>
      <div className="mt-[22px] flex items-center justify-between">
        <p className="-ml-px pt-[2px] whitespace-nowrap">
          Информацию о покупке лицензий вы можете получить на <a href="#site" className="text-[#0b6fc2] underline">нашем сайте</a>
        </p>
        <button type="button" className={clsx(DIALOG_BUTTON, 'justify-center')}>Закрыть</button>
      </div>
    </div>
  </div>
)

/* ---------- windows taskbar ---------- */

const TaskButton: React.FC<{ label: string; className?: string; children: React.ReactNode }> = ({ label, className, children }) => (
  <button type="button" aria-label={label} className={clsx('flex h-full w-12 items-center justify-center', className)}>
    {children}
  </button>
)

const Taskbar = () => (
  <div className="flex h-10 items-center bg-[#3f3129] font-['Open_Sans',sans-serif] text-white">
    <TaskButton label="Пуск">
      <svg width="16" height="16" viewBox="0 0 16 16" fill="#fff">
        <path d="M0 2.200L6.500 1.300v6.300H0zM7.300 1.200L16 0v7.600H7.300zM0 8.400h6.500v6.300L0 13.800zM7.300 8.400H16V16l-8.700-1.200z" />
      </svg>
    </TaskButton>
    <TaskButton label="Поиск в системе">
      <svg width="22" height="22" viewBox="0 0 22 22" fill="none" stroke="#fff" strokeWidth="2">
        <circle cx="13" cy="9" r="7.800" />
        <path d="M7.500 14.500L1 21" />
      </svg>
    </TaskButton>
    <TaskButton label="Представление задач">
      <svg width="17" height="16" viewBox="0 0 17 16" fill="none" stroke="#fff">
        <path d="M.5 4.500h10v7H.5zM.5 0v2.500h10V0M.5 16v-2.500h10V16M14.500 0v16" />
        <path d="M13.500 5.500h2v2h-2z" fill="#fff" />
      </svg>
    </TaskButton>
    <div className="ml-[3px] flex h-full gap-px">
      <TaskButton label="Почта">
        <svg width="24" height="22" viewBox="0 0 24 22">
          <path d="M0 8L12 0l12 8z" fill="#1160a8" />
          <path d="M0 7h24v15H0z" fill="#2ba3ec" />
          <path d="M1 7h22L12 15z" fill="#f3f6f8" />
          <path d="M0 7l12 9L0 22z" fill="#1a84d6" />
          <path d="M24 7l-12 9 12 6z" fill="#3cb8f4" />
        </svg>
      </TaskButton>
      <TaskButton label="Edge" className="px-1">
        <span className="flex h-full w-full items-center justify-center border-b-2 border-[#76b9ed]">
          <svg width="24" height="24" viewBox="0 0 24 24">
            <circle cx="12" cy="12" r="12" fill="#1478cc" />
            <path d="M1 8C4-2 20-3 23.500 8c1.500 6-4 8.500-8.500 7-1.500-.5-.5-1.500 0-3 .8-3-2-5-5-5-4 0-7 1.500-9 4z" fill="#35c1c8" />
            <path d="M14 1c6 .5 10 5 9.700 10-.5 4-5 5.500-8.700 4-1.500-.5-.3-1.500 0-3 1-5-2-7-1-11z" fill="#5ad65f" />
            <path d="M9 11c-3 4 0 10 6 10 3 0 5-1 7-3.500-1 .6-2.500 1-4.500 1-4.500 0-8-3-8.500-7.500z" fill="#3f3129" />
            <path d="M9.500 8C5 11 4 19 11 23.900 5 23.800.5 19 0 13c1-4 6-6 9.500-5z" fill="#1b55a8" />
          </svg>
        </span>
      </TaskButton>
      <TaskButton label="Магазин">
        <svg width="24" height="24" viewBox="0 0 24 24">
          <path d="M7 6V1.500h10V6" fill="none" stroke="#3aa7e8" strokeWidth="2" />
          <path d="M1 5h22v16a3 3 0 0 1-3 3H4a3 3 0 0 1-3-3z" fill="#f1f1f1" />
          <path d="M7 9.500h4.500V14H7z" fill="#e5532d" />
          <path d="M12.500 9.500H17V14h-4.500z" fill="#7db928" />
          <path d="M7 15h4.500v4.500H7z" fill="#24a0e4" />
          <path d="M12.500 15H17v4.500h-4.500z" fill="#f9b91f" />
        </svg>
      </TaskButton>
      <TaskButton label="Проводник">
        <svg width="22" height="19" viewBox="0 0 22 19">
          <path d="M0 1h8l2 2h11v4H0z" fill="#e0a526" />
          <path d="M0 4h22v14H0z" fill="#fbd469" />
          <path d="M4 10h14v9h-4v-4H8v4H4z" fill="#3f92d0" />
        </svg>
      </TaskButton>
      <TaskButton label="ЛЭРС" className="border-b-2 border-[#76b9ed] bg-[#665b55]">
        <LersMark size={24} framed />
      </TaskButton>
    </div>
    <div className="ml-auto flex h-full items-center">
      <svg width="12" height="7" viewBox="0 0 12 7" fill="none" stroke="#fff" strokeWidth="1.300"><path d="M.5 6.500L6 1l5.500 5.500" /></svg>
      <svg width="17" height="12" viewBox="0 0 17 12" fill="none" stroke="#fff" className="ml-[10px]">
        <path d="M5.500 3.500h9v7h-9V8M16 5.500v3" />
        <path d="M8 5h5v4H8z" fill="#fff" stroke="none" />
        <path d="M1.500 0v2M4.500 0v2M.5 2.500h5V5l-1.500 1H2L.5 5zM3 6v4.500h2" />
      </svg>
      <svg width="17" height="13" viewBox="0 0 17 13" className="ml-2">
        <path d="M4 11a3.500 3.500 0 0 1 0-7 5 5 0 0 1 8.500 1A3 3 0 0 1 14 11z" fill="#a49b96" />
        <path d="M1 .5l15 12" stroke="#fff" strokeWidth="1.200" />
      </svg>
      <svg width="17" height="14" viewBox="0 0 17 14" fill="none" stroke="#fff" className="ml-[6px]">
        <path d="M.5 5h2.500l3.500-3.500v11L3 9H.5zM9 5q1.500 2 0 4M11.500 3q3 4 0 8M14 1q4.500 6 0 12" />
      </svg>
      <span className="ml-[10px] w-6 text-center text-xs">РУС</span>
      <div className="ml-2 w-[61px] pb-[2px] text-center text-[11px] leading-[18px]">
        <div>13:51</div>
        <div>21.05.2025</div>
      </div>
      <button type="button" aria-label="Уведомления системы" className="relative ml-[14px] w-9">
        <svg width="20" height="16" viewBox="0 0 20 16">
          <path d="M0 0h17v12H9l-4 4v-4H0z" fill="#fff" />
          <path d="M3 3.500h11M3 6h11M3 8.500h7" stroke="#3f3129" />
        </svg>
        <span className="absolute top-[7px] left-2 flex size-4 items-center justify-center rounded-full border border-[#a0a0a0] bg-[#2f2826] text-[11px] leading-none font-semibold">1</span>
      </button>
      <div className="h-full w-[5px] border-l border-[#7a706a]" />
    </div>
  </div>
)

export default function App() {
  return (
    <div className="relative bg-white font-['DejaVu_Sans_Condensed','DejaVu_Sans',sans-serif] text-[11px] leading-[14px] text-[#404040]">
      <div className="bg-[#f0f0f0]">
        <TitleBar />
        <Ribbon />
        <DocumentTabs />
        <div className="mx-px flex gap-[2px] border border-[#c0c0c0] pl-[2px]">
          <SidePanel />
          <PointsGrid />
        </div>
        <StatusBar />
      </div>
      <Taskbar />
      <ActivationDialog />
    </div>
  )
}
